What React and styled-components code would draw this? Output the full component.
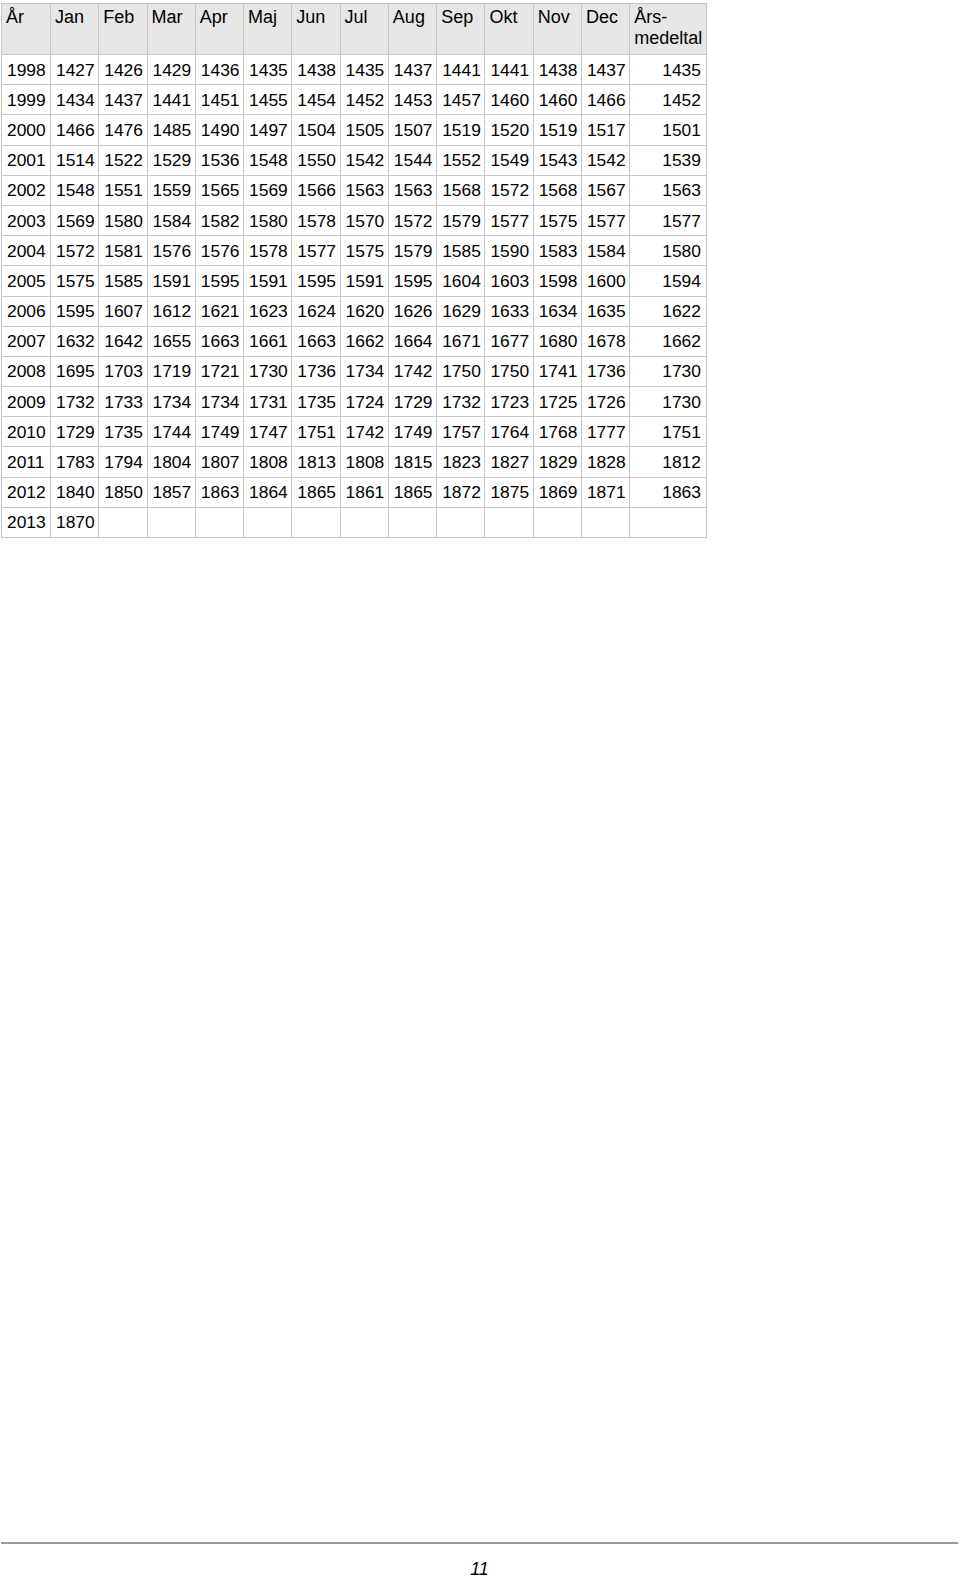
import styled, { createGlobalStyle } from "styled-components";

const GlobalStyle = createGlobalStyle`
  html, body {
    margin: 0;
    padding: 0;
    background: #ffffff;
  }
  body {
    font-family: "Liberation Sans", Arial, sans-serif;
    color: #000;
  }
`;

const months = ["Jan", "Feb", "Mar", "Apr", "Maj", "Jun", "Jul", "Aug", "Sep", "Okt", "Nov", "Dec"];

const rows = [
  [1998, 1427, 1426, 1429, 1436, 1435, 1438, 1435, 1437, 1441, 1441, 1438, 1437, 1435],
  [1999, 1434, 1437, 1441, 1451, 1455, 1454, 1452, 1453, 1457, 1460, 1460, 1466, 1452],
  [2000, 1466, 1476, 1485, 1490, 1497, 1504, 1505, 1507, 1519, 1520, 1519, 1517, 1501],
  [2001, 1514, 1522, 1529, 1536, 1548, 1550, 1542, 1544, 1552, 1549, 1543, 1542, 1539],
  [2002, 1548, 1551, 1559, 1565, 1569, 1566, 1563, 1563, 1568, 1572, 1568, 1567, 1563],
  [2003, 1569, 1580, 1584, 1582, 1580, 1578, 1570, 1572, 1579, 1577, 1575, 1577, 1577],
  [2004, 1572, 1581, 1576, 1576, 1578, 1577, 1575, 1579, 1585, 1590, 1583, 1584, 1580],
  [2005, 1575, 1585, 1591, 1595, 1591, 1595, 1591, 1595, 1604, 1603, 1598, 1600, 1594],
  [2006, 1595, 1607, 1612, 1621, 1623, 1624, 1620, 1626, 1629, 1633, 1634, 1635, 1622],
  [2007, 1632, 1642, 1655, 1663, 1661, 1663, 1662, 1664, 1671, 1677, 1680, 1678, 1662],
  [2008, 1695, 1703, 1719, 1721, 1730, 1736, 1734, 1742, 1750, 1750, 1741, 1736, 1730],
  [2009, 1732, 1733, 1734, 1734, 1731, 1735, 1724, 1729, 1732, 1723, 1725, 1726, 1730],
  [2010, 1729, 1735, 1744, 1749, 1747, 1751, 1742, 1749, 1757, 1764, 1768, 1777, 1751],
  [2011, 1783, 1794, 1804, 1807, 1808, 1813, 1808, 1815, 1823, 1827, 1829, 1828, 1812],
  [2012, 1840, 1850, 1857, 1863, 1864, 1865, 1861, 1865, 1872, 1875, 1869, 1871, 1863],
  [2013, 1870, "", "", "", "", "", "", "", "", "", "", "", ""],
];

const Page = styled.div`
  display: flex;
  flex-direction: column;
  padding: 3px 2px 0 1px;
`;

const Table = styled.table`
  border-collapse: collapse;
  table-layout: fixed;
  width: 705px;
  font-size: 17.4px;
`;

const Col = styled.col`
  width: ${(p) => p.$w}px;
`;

const HeadCell = styled.th`
  background: #e6e6e6;
  border: 1px solid #c6c6c6;
  height: 51px;
  box-sizing: border-box;
  padding: 3px 3px 0 4px;
  text-align: left;
  vertical-align: top;
  font-weight: normal;
  font-size: 18px;
  line-height: 21px;
`;

const Row = styled.tr`
  height: 30.2px;
`;

const Cell = styled.td`
  border: 1px solid #c6c6c6;
  padding: 0 ${(p) => (p.$right ? 5 : 0)}px 0 5px;
  text-align: ${(p) => (p.$right ? "right" : "left")};
  vertical-align: middle;
  line-height: 20px;
  white-space: nowrap;
`;

const Footer = styled.footer`
  display: flex;
  flex-direction: column;
  align-items: center;
  margin-top: 1004px;
`;

const Rule = styled.div`
  align-self: stretch;
  height: 2px;
  background: #9a9a9a;
`;

const PageNumber = styled.div`
  margin-top: 18px;
  font-style: italic;
  font-size: 18px;
  line-height: 14px;
`;

export default function App() {
  return (
    <>
      <GlobalStyle />
      <Page>
        <Table>
          <colgroup>
            <Col $w={49} />
            {months.map((m) => (
              <Col key={m} $w={48.27} />
            ))}
            <Col $w={76.76} />
          </colgroup>
          <thead>
            <tr>
              <HeadCell>År</HeadCell>
              {months.map((m) => (
                <HeadCell key={m}>{m}</HeadCell>
              ))}
              <HeadCell>
                Års-
                <br />
                medeltal
              </HeadCell>
            </tr>
          </thead>
          <tbody>
            {rows.map((r) => (
              <Row key={r[0]}>
                {r.map((v, i) => (
                  <Cell key={i} $right={i === r.length - 1}>
                    {v}
                  </Cell>
                ))}
              </Row>
            ))}
          </tbody>
        </Table>
        <Footer>
          <Rule />
          <PageNumber>11</PageNumber>
        </Footer>
      </Page>
    </>
  );
}
